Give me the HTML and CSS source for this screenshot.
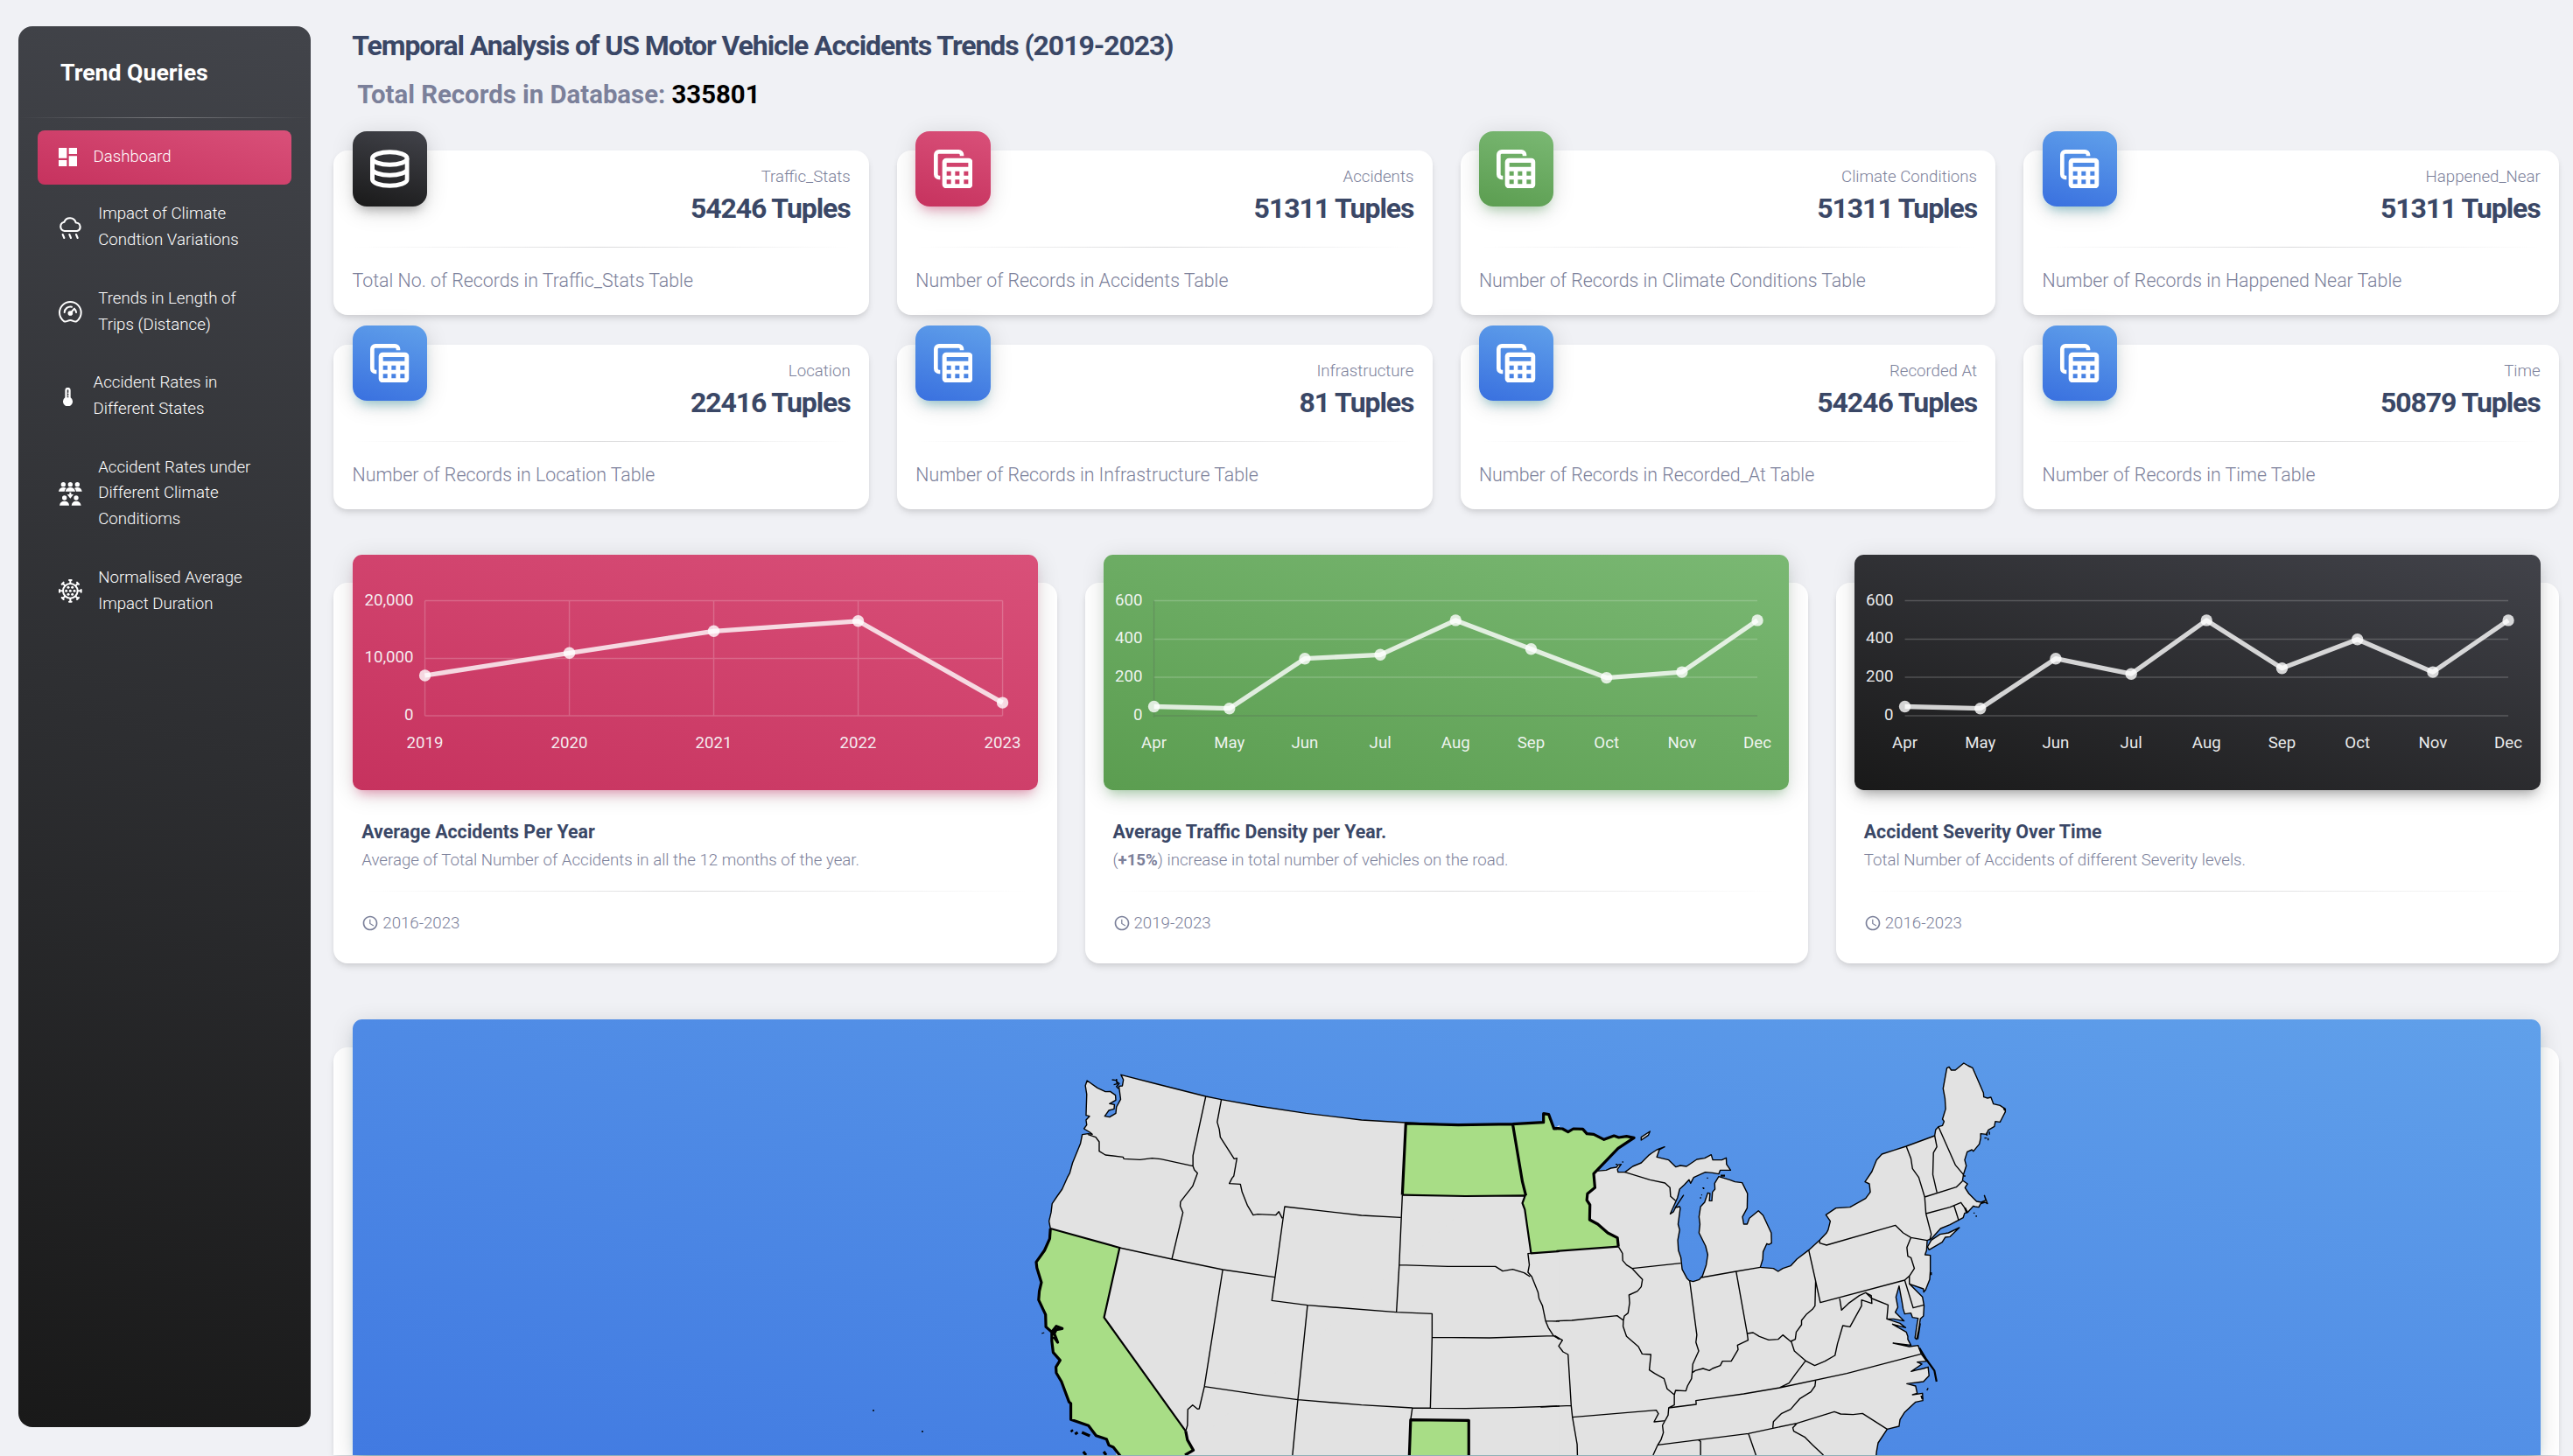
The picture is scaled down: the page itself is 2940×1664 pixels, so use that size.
FILE: index.html
```html
<!DOCTYPE html>
<html lang="en">
<head>
<meta charset="utf-8">
<title>Temporal Analysis of US Motor Vehicle Accidents Trends</title>
<link rel="stylesheet" href="styles.css">
</head>
<body>
<svg class="sprite" aria-hidden="true">
  <symbol id="i-table" viewBox="0 0 134 134">
    <path d="M22 96H18a11 11 0 0 1-11-11V18a11 11 0 0 1 11-11H85a11 11 0 0 1 11 11V22" fill="none" stroke="currentColor" stroke-width="14"/>
    <path fill="currentColor" fill-rule="evenodd" d="M43 29H119a14 14 0 0 1 14 14V119a14 14 0 0 1-14 14H43a14 14 0 0 1-14-14V43a14 14 0 0 1 14-14ZM44 45V59H118V45ZM44 74V89H59V74ZM73 74V89H88V74ZM103 74V89H118V74ZM44 103V118H59V103ZM73 103V118H88V103ZM103 103V118H118V103Z"/>
  </symbol>
  <symbol id="i-db" viewBox="0 0 134 134">
    <g fill="none" stroke="currentColor" stroke-width="15"><ellipse cx="67" cy="30" rx="59.5" ry="22"/><path d="M7.500 30V102a59.500 22 0 0 0 119 0V30M7.500 66a59.500 22 0 0 0 119 0"/></g>
  </symbol>
  <symbol id="i-clock" viewBox="0 0 24 24"><path fill="currentColor" d="M11.990 2C6.470 2 2 6.480 2 12s4.470 10 9.990 10C17.520 22 22 17.520 22 12S17.520 2 11.990 2zM12 20c-4.420 0-8-3.580-8-8s3.580-8 8-8 8 3.580 8 8-3.580 8-8 8zm.5-13H11v6l5.250 3.150.75-1.230-4.500-2.670z"/></symbol>
</svg>

<aside class="sidebar">
  <h1 class="brand">Trend Queries</h1>
  <hr class="rule rule-light">
  <nav class="nav">
    <a class="item active"><svg class="ico" viewBox="3 3 18 18"><path fill="currentColor" d="M3 13h8V3H3v10zm0 8h8v-6H3v6zm10 0h8V11h-8v10zm0-18v6h8V3h-8z"/></svg><span>Dashboard</span></a>
    <a class="item"><svg class="ico wide" viewBox="0 0 80 80"><g fill="none" stroke="currentColor" stroke-width="6.300" stroke-linecap="round" stroke-linejoin="round"><path d="M20 51a15.500 15.500 0 0 1-1-30.500A21 21 0 0 1 59 22.500 14.500 14.500 0 0 1 63 51Z"/><path d="M14 63l5 12M37 63l5 12M60 63l5 12"/></g></svg><span>Impact of Climate<br>Condtion Variations</span></a>
    <a class="item"><svg class="ico wide" viewBox="0 0 80 80"><g fill="none" stroke="currentColor" stroke-width="6" stroke-linecap="round" stroke-linejoin="round"><path d="M19 73C9 66 3 55 3 43a37 37 0 0 1 74 0C77 55 71 66 61 73c-8 3-12-4-21-4s-13 7-21 4Z"/><path d="M20 42a20.500 20.500 0 0 1 25-19M57 33a20 20 0 0 1 3 9M40 45L54 29"/></g><circle cx="40" cy="45" r="8.500" fill="currentColor"/></svg><span>Trends in Length of<br>Trips (Distance)</span></a>
    <a class="item"><svg class="ico" viewBox="0 0 63 63"><path fill="currentColor" fill-rule="evenodd" d="M22 9a9.500 9.500 0 0 1 19 0V34a16.500 16.500 0 1 1-19 0ZM29 9V34H34V29H31V26H34V20H31V17H34V9a2.500 2.500 0 0 0-5 0Z"/></svg><span>Accident Rates in<br>Different States</span></a>
    <a class="item"><svg class="ico wide" viewBox="0 0 80 80"><g fill="currentColor"><circle cx="16" cy="8" r="8"/><circle cx="40" cy="8" r="8"/><circle cx="64" cy="8" r="8"/><path d="M0 32q2-14 16-14q7 0 10 3-5 4-6 11ZM23 32q3-14 17-14t17 14ZM80 32q-2-14-16-14-7 0-10 3 5 4 6 11ZM37 35h6V42h8L40 56 29 42h8Z"/><circle cx="20" cy="54" r="8"/><circle cx="60" cy="54" r="8"/><path d="M3 80q2-15 17-15t16 15ZM44 80q2-15 16-15t17 15Z"/></g></svg><span>Accident Rates under<br>Different Climate<br>Conditioms</span></a>
    <a class="item"><svg class="ico wide" viewBox="0 0 80 80"><g fill="none" stroke="currentColor" stroke-width="6" stroke-linecap="round"><circle cx="40" cy="40" r="25"/><path d="M40 14V3M36 3h8M40 66V77M36 77h8M14 40H3M3 36v8M66 40H77M77 36v8M22 22L14 14M11 17l6-6M58 22l8-8M63 11l6 6M22 58l-8 8M11 63l6 6M58 58l8 8M63 69l6-6"/></g><g fill="currentColor"><circle cx="33" cy="28" r="4.500"/><circle cx="47" cy="28" r="4.500"/><circle cx="26" cy="40" r="4.500"/><circle cx="40" cy="40" r="4.500"/><circle cx="54" cy="40" r="4.500"/><circle cx="33" cy="52" r="4.500"/><circle cx="47" cy="52" r="4.500"/></g></svg><span>Normalised Average<br>Impact Duration</span></a>
  </nav>
</aside>

<main class="main">
  <h2 class="title">Temporal Analysis of US Motor Vehicle Accidents Trends (2019-2023)</h2>
  <p class="total">Total Records in Database: <b>335801</b></p>

  <section class="stats">
    <article class="card stat"><div class="badge dark"><svg><use href="#i-db"/></svg></div><p class="label">Traffic_Stats</p><p class="num">54246 Tuples</p><hr class="rule"><p class="desc">Total No. of Records in Traffic_Stats Table</p></article>
    <article class="card stat"><div class="badge pink"><svg><use href="#i-table"/></svg></div><p class="label">Accidents</p><p class="num">51311 Tuples</p><hr class="rule"><p class="desc">Number of Records in Accidents Table</p></article>
    <article class="card stat"><div class="badge green"><svg><use href="#i-table"/></svg></div><p class="label">Climate Conditions</p><p class="num">51311 Tuples</p><hr class="rule"><p class="desc">Number of Records in Climate Conditions Table</p></article>
    <article class="card stat"><div class="badge blue"><svg><use href="#i-table"/></svg></div><p class="label">Happened_Near</p><p class="num">51311 Tuples</p><hr class="rule"><p class="desc">Number of Records in Happened Near Table</p></article>
    <article class="card stat"><div class="badge blue"><svg><use href="#i-table"/></svg></div><p class="label">Location</p><p class="num">22416 Tuples</p><hr class="rule"><p class="desc">Number of Records in Location Table</p></article>
    <article class="card stat"><div class="badge blue"><svg><use href="#i-table"/></svg></div><p class="label">Infrastructure</p><p class="num">81 Tuples</p><hr class="rule"><p class="desc">Number of Records in Infrastructure Table</p></article>
    <article class="card stat"><div class="badge blue"><svg><use href="#i-table"/></svg></div><p class="label">Recorded At</p><p class="num">54246 Tuples</p><hr class="rule"><p class="desc">Number of Records in Recorded_At Table</p></article>
    <article class="card stat"><div class="badge blue"><svg><use href="#i-table"/></svg></div><p class="label">Time</p><p class="num">50879 Tuples</p><hr class="rule"><p class="desc">Number of Records in Time Table</p></article>
  </section>

  <section class="charts">
    <article class="card chart-card">
      <div class="plot pink"><svg viewBox="0 0 783.500 269">
        <path class="grid" d="M82.500 52.500H742.500M82.500 118.500H742.500M82.500 184H742.500M82.500 52.500V184M247.500 52.500V184M412.500 52.500V184M577.500 52.500V184M742.500 52.500V184"/>
        <polyline class="line" points="82.500,138 247.500,112.300 412.500,87.300 577.500,75.800 742.500,169.100"/>
        <g class="dots"><circle cx="82.500" cy="138" r="6.700"/><circle cx="247.500" cy="112.300" r="6.700"/><circle cx="412.500" cy="87.300" r="6.700"/><circle cx="577.500" cy="75.800" r="6.700"/><circle cx="742.500" cy="169.100" r="6.700"/></g>
        <g class="yl"><text x="69.500" y="58">20,000</text><text x="69.500" y="123">10,000</text><text x="69.500" y="188.500">0</text></g>
        <g class="xl"><text x="82.500" y="220.700">2019</text><text x="247.500" y="220.700">2020</text><text x="412.500" y="220.700">2021</text><text x="577.500" y="220.700">2022</text><text x="742.500" y="220.700">2023</text></g>
      </svg></div>
      <h3>Average Accidents Per Year</h3><p class="sub">Average of Total Number of Accidents in all the 12 months of the year.</p><hr class="rule"><p class="foot"><svg><use href="#i-clock"/></svg>2016-2023</p>
    </article>
    <article class="card chart-card">
      <div class="plot green"><svg viewBox="0 0 783.500 269">
        <path class="grid" d="M57.500 52.500H747M57.500 96.500H747M57.500 140H747"/><path class="axis" d="M57.500 52.500V186M57.500 184H747"/>
        <polyline class="line" points="57.500,173.500 143.700,175.700 229.900,118.700 316.100,114.300 402.200,74.900 488.400,107.700 574.600,140.600 660.800,134.100 747,74.900"/>
        <g class="dots"><circle cx="57.500" cy="173.500" r="6.700"/><circle cx="143.700" cy="175.700" r="6.700"/><circle cx="229.900" cy="118.700" r="6.700"/><circle cx="316.100" cy="114.300" r="6.700"/><circle cx="402.200" cy="74.900" r="6.700"/><circle cx="488.400" cy="107.700" r="6.700"/><circle cx="574.600" cy="140.600" r="6.700"/><circle cx="660.800" cy="134.100" r="6.700"/><circle cx="747" cy="74.900" r="6.700"/></g>
        <g class="yl"><text x="44.500" y="57.500">600</text><text x="44.500" y="101">400</text><text x="44.500" y="145">200</text><text x="44.500" y="188.500">0</text></g>
        <g class="xl"><text x="57.500" y="220.700">Apr</text><text x="143.700" y="220.700">May</text><text x="229.900" y="220.700">Jun</text><text x="316.100" y="220.700">Jul</text><text x="402.200" y="220.700">Aug</text><text x="488.400" y="220.700">Sep</text><text x="574.600" y="220.700">Oct</text><text x="660.800" y="220.700">Nov</text><text x="747" y="220.700">Dec</text></g>
      </svg></div>
      <h3>Average Traffic Density per Year.</h3><p class="sub">(<b>+15%</b>) increase in total number of vehicles on the road.</p><hr class="rule"><p class="foot"><svg><use href="#i-clock"/></svg>2019-2023</p>
    </article>
    <article class="card chart-card">
      <div class="plot dark"><svg viewBox="0 0 783.500 269">
        <path class="grid" d="M57.500 52.500H747M57.500 96.500H747M57.500 140H747M57.500 184H747"/>
        <polyline class="line" points="57.500,173.500 143.700,175.700 229.900,118.700 316.100,136.200 402.200,74.900 488.400,129.700 574.600,96.800 660.800,134.100 747,74.900"/>
        <g class="dots"><circle cx="57.500" cy="173.500" r="6.700"/><circle cx="143.700" cy="175.700" r="6.700"/><circle cx="229.900" cy="118.700" r="6.700"/><circle cx="316.100" cy="136.200" r="6.700"/><circle cx="402.200" cy="74.900" r="6.700"/><circle cx="488.400" cy="129.700" r="6.700"/><circle cx="574.600" cy="96.800" r="6.700"/><circle cx="660.800" cy="134.100" r="6.700"/><circle cx="747" cy="74.900" r="6.700"/></g>
        <g class="yl"><text x="44.500" y="57.500">600</text><text x="44.500" y="101">400</text><text x="44.500" y="145">200</text><text x="44.500" y="188.500">0</text></g>
        <g class="xl"><text x="57.500" y="220.700">Apr</text><text x="143.700" y="220.700">May</text><text x="229.900" y="220.700">Jun</text><text x="316.100" y="220.700">Jul</text><text x="402.200" y="220.700">Aug</text><text x="488.400" y="220.700">Sep</text><text x="574.600" y="220.700">Oct</text><text x="660.800" y="220.700">Nov</text><text x="747" y="220.700">Dec</text></g>
      </svg></div>
      <h3>Accident Severity Over Time</h3><p class="sub">Total Number of Accidents of different Severity levels.</p><hr class="rule"><p class="foot"><svg><use href="#i-clock"/></svg>2016-2023</p>
    </article>
  </section>

  <section class="card map-card">
    <div class="map blue">
      <svg class="us" viewBox="0 0 2500 498">
        <g transform="matrix(.35714 0 0 .33333 1357.300 14)">
          <path class="land" d="M50,1600 L50,332 70,333 88,344 105,333 135,334 148,350 170,352 203,370 235,357 250,363 275,359 299,364 285,374 248,400 178,478 210,475 225,468 243,465 248,457 258,455 246,472 248,482 270,482 295,462 322,450 345,425 355,417 372,405 397,395 380,405 372,430 410,440 433,464 447,459 467,462 500,438 525,434 546,422 551,440 580,440 594,433 595,455 608,475 575,475 570,488 550,484 527,482 490,500 480,520 475,508 460,525 445,540 438,570 415,625 425,618 432,603 445,600 447,605 440,660 445,680 439,715 441,750 449,775 453,815 468,845 475,853 488,857 508,850 518,838 530,800 535,765 528,735 507,690 510,660 507,635 512,600 525,585 535,553 542,555 540,580 548,580 550,550 558,540 557,520 570,497 605,508 622,515 645,518 662,555 661,605 646,635 650,660 661,660 668,640 697,614 712,630 738,690 739,725 730,730 724,727 712,755 711,780 703,808 745,812 760,822 775,812 800,803 820,780 858,749 893,715 915,690 920,680 927,650 913,628 945,605 990,602 1040,572 1055,550 1052,522 1038,515 1060,480 1075,440 1092,420 1130,407 1170,393 1261,357 1264,337 1273,326 1286,322 1291,308 1286,300 1296,265 1294,230 1288,195 1300,125 1307,121 1314,132 1327,132 1354,108 1368,117 1382,124 1417,210 1418,224 1430,228 1441,225 1449,248 1470,253 1487,265 1487,275 1475,300 1470,310 1455,308 1452,325 1432,338 1427,352 1408,350 1408,365 1404,385 1385,410 1380,405 1365,412 1357,440 1362,460 1353,490 1350,510 1366,522 1358,535 1370,555 1395,582 1410,585 1425,578 1420,562 1430,590 1422,585 1408,590 1402,602 1390,600 1385,598 1366,620 1357,622 1352,638 1310,662 1280,675 1250,710 1237,716 1235,750 1230,765 1247,767 1247,820 1245,850 1232,885 1226,893 1225,882 1180,865 1222,910 1227,940 1225,975 1215,985 1210,1020 1203,1055 1198,1050 1205,1000 1208,983 1190,980 1185,965 1165,968 1160,950 1157,930 1147,872 1137,910 1143,945 1135,962 1163,992 1130,985 1108,985 1150,1000 1168,1015 1126,1003 1170,1030 1175,1045 1175,1055 1185,1075 1128,1068 1180,1080 1208,1076 1218,1105 1235,1130 1205,1133 1220,1140 1186,1165 1205,1160 1225,1155 1240,1150 1243,1180 1225,1200 1172,1207 1200,1215 1205,1240 1190,1245 1222,1240 1223,1265 1200,1270 1165,1305 1150,1330 1147,1353 1109,1363 1080,1410 1075,1440 1060,1600Z"/>
        </g>
        <g transform="matrix(.3954 0 0 .33333 757.300 14)">
          <path class="fill" d="M1572,320 L1572,1600 300,1600 290,1430Z"/>
          <path class="land" d="M1572,332 L1556,332 1541,284 1526,281 1526,311 1437,317 1280,320 1128,312 1000,303 840,280 700,255 595,233 550,222 400,177 305,148 312,165 309,186 299,187 304,232 292,258 290,280 272,293 258,290 270,270 285,265 286,250 272,247 290,235 289,218 274,205 260,206 237,193 207,168 202,185 206,215 204,287 214,290 204,303 206,320 198,333 215,345 222,352 210,350 193,353 188,383 165,450 157,485 150,500 135,540 119,567 106,590 103,620 97,650 101,675 99,710 84,750 60,790 62,810 75,860 69,890 67,920 87,970 88,1012 105,1030 105,1060 109,1100 129,1127 117,1150 118,1170 133,1200 155,1270 160,1275 160,1330 211,1351 233,1385 263,1397 270,1418 283,1425 303,1455 330,1600"/>
          <path class="hot" d="M101,675 L301,741 256,980 492,1370 497,1400 514,1435 490,1450 480,1600 330,1600 303,1455 283,1425 270,1418 263,1397 233,1385 211,1351 160,1330 160,1275 155,1270 133,1200 118,1170 117,1150 129,1127 109,1100 105,1060 105,1030 88,1012 87,970 67,920 69,890 75,860 62,810 60,790 84,750 99,710ZM1128,315 L1280,320 1437,317 1465,515 1473,562 1300,564 1118,560ZM1437,317 L1526,311 1526,281 1541,284 1556,332 1572,332 1572,753 1490,760 1472,610 1465,588 1475,568 1465,515ZM1142,1331 L1310,1333 1310,1600 1130,1600Z"/>
          <path class="thin" d="M210,353 L232,362 242,378 242,410 260,423 311,430 313,436 360,439 395,434 420,437 513,461M550,222 L513,425 513,461 517,474 526,485 512,530 477,583 476,598 484,620 452,780M301,741 L452,780 599,816 749,842M595,233 L583,310 589,335 592,362 632,436 640,434 631,495 626,502 618,521 650,523 655,550 670,595 687,629 700,626 752,629 761,617 771,640M1101,962 L1204,967 1204,1048 1199,1290M1113,637 L1000,630 778,600 741,922 844,938 1101,962 1109,800 1118,560M599,816 L546,1217 531,1293 526,1294 512,1280 498,1295 497,1350 492,1370M844,938 L816,1262 800,1460M546,1217 L700,1244 816,1262 1000,1280 1147,1290 1300,1292 1440,1289 1572,1284M1147,1290 L1142,1331M1204,1048 L1370,1050 1555,1043M1109,800 L1250,805 1387,805 1408,821 1437,815 1470,827 1487,840M1490,760 L1481,761 1485,800 1481,825 1492,840 1510,893 1513,915 1523,940 1532,992 1540,1015 1555,1043 1572,1055M1532,992 L1572,993"/>
          <path class="thin" d="M279,165l12,2 3,12-10,3m8-20 1,10 7,6-8,10 6,8"/>
          <path class="thick" d="M101,675 L99,710 84,750 60,790 62,810 75,860 69,890 67,920 87,970 88,1012 105,1030 105,1060 109,1100 129,1127 117,1150 118,1170 133,1200 155,1270 160,1275 160,1330 211,1351 233,1385 263,1397 270,1418 283,1425 303,1455M492,1370 L497,1400 514,1435 490,1452M105,1030 L118,1010 135,1018 118,1022 112,1035 122,1065 110,1045M1118,560 L1128,315 1280,320 1437,317 1465,515 1475,562M1437,317 L1526,311 1526,281 1541,284 1556,332 1572,332M1138,1460 L1142,1331 1310,1333 1310,1460M172,1380 L180,1374M192,1374 L215,1386M196,1440 L204,1452M255,1440 L262,1452M161,1366l4,6M79,1032l1,3"/>
          <path class="mid" d="M101,675 L301,741 256,980 492,1370M1118,560 L1300,564 1473,562 1465,588 1472,610 1490,760 1572,753"/>
        </g>
        <g transform="matrix(.35714 0 0 .33333 1357.300 14)">
          <path class="hot" d="M48,332 L70,333 88,344 105,333 135,334 148,350 170,352 203,370 235,357 250,363 275,359 299,364 285,374 248,400 178,478 170,487 174,535 150,556 148,578 158,594 157,645 183,660 215,690 246,707 249,737 48,753Z"/>
          <path class="thick" d="M40,332 L70,333 88,344 105,333 135,334 148,350 170,352 203,370 235,357 250,363 275,359 299,364 285,374 248,400 178,478 170,487 174,535 150,556 148,578 158,594 157,645 183,660 215,690 246,707 249,737"/>
          <path class="mid" d="M48,753 L249,737"/>
          <path class="land" d="M322,362 L350,342 345,355 322,372ZM1243,748 L1238,738 1250,715 1278,695 1305,690 1340,672 1310,703 1295,705 1285,722Z"/>
          <path class="thin" d="M270,482 L350,508 398,519 414,535 416,565 432,580M458,560 L430,605M249,737 L262,760 263,785 275,800 293,812 326,850 322,875 310,890 283,903 285,930 280,965 268,975 265,990 264,1010 275,1045 313,1080 325,1105 353,1107 348,1160 365,1172 395,1190 405,1225 428,1245 428,1280 410,1290 408,1315 390,1350 393,1375 385,1400 375,1417 360,1452M293,812 L449,794M50,992 L100,990 245,974 265,990M45,1042 L60,1052 70,1058 58,1078 72,1098 88,1107 98,1282 102,1322 117,1415 118,1455M0,1287 L98,1282M102,1322 L370,1298 377,1310 363,1338 400,1334M477,853 L500,1040 497,1065 506,1095 487,1140 485,1170M858,749 L880,855 878,940 870,952 850,970 835,990 835,1005 818,1030 815,1055 800,1062 775,1040 760,1055 730,1057 700,1045 680,1032 661,1035M626,824 L661,1035 664,1058 630,1075 632,1090 610,1130 582,1130 575,1145 550,1155 540,1162 520,1155 495,1162 485,1170 483,1190 470,1215 465,1232 432,1230 428,1245M515,843 L626,822 703,808M880,855 L895,929 1165,852 1180,838 1196,812 1185,775 1175,770 1172,740 1185,706 1237,716M1185,706 L1160,690 1135,664 915,732 893,725 893,715M957,915 L963,955 985,932 1020,905 1040,895 1058,905 1060,932 1027,920 1027,940 990,1012 967,1008 950,1070 942,1110 910,1130 877,1145 850,1130 812,1095 802,1062M1040,895 L1060,915 1112,937 1108,985M1165,852 L1192,947 1227,937M1180,838 L1180,865M847,1130 L815,1175 795,1205 765,1221M1218,1105 L980,1172 765,1221 650,1242 497,1265 498,1278 410,1290M880,1197 L878,1215 865,1235 830,1258 800,1295 770,1310 745,1337 743,1358M375,1417 L665,1378 743,1360 820,1343 940,1303 960,1311 1000,1313 1030,1309 1109,1363M820,1343 L807,1358 810,1370 845,1390 870,1417 905,1452M665,1378 L690,1455M505,1400 L512,1405 512,1455M1170,393 L1185,435 1190,470 1210,500 1229,567 1233,624 1250,695 1245,715M1261,357 L1268,395 1257,415 1255,490 1268,551M1273,326 L1327,457 1353,490M1229,567 L1330,533 1350,512M1233,624 L1310,602 1345,586 1366,618M1323,597 L1338,648"/>
          <path class="mid" d="M1212,1085 L1235,1125 1260,1162 1267,1200M1482,262l4,8M1358,604l6,18M576,494h14M1218,1248l4,12"/>
          <path class="thin" d="M1428,345v12m8-14v10m-16 12h8m4 0v8M1385,622h4M1394,630v5M518,536h4v4M532,502h4M510,570h4M514,560h3M240,455h6M263,445v4M1357,492v6M1240,1222l-4,8M1215,1000l-8,55M1250,825v10"/>
        </g>
        <path class="thin" d="M594,447h2M650,471h2"/>
      </svg>
    </div>
  </section>
</main>
</body>
</html>
```
FILE: styles.css
```css
* { box-sizing: border-box; }
body {
  margin: 0;
  height: 1664px;
  overflow: hidden;
  display: flex;
  align-items: flex-start;
  background: #f0f1f5;
  font-family: Roboto, "Liberation Sans", sans-serif;
  font-weight: 300;
  color: #7b809a;
}
p, h1, h2, h3 { margin: 0; }
b { font-weight: 700; }
.sprite { position: absolute; width: 0; height: 0; }

.dark { background: linear-gradient(195deg, #42434a, #191919); --glow: rgba(64, 64, 64, .4); }
.pink { background: linear-gradient(195deg, #d95079, #c6325e); --glow: rgba(233, 30, 99, .4); }
.green { background: linear-gradient(195deg, #7ab873, #5b9d50); --glow: rgba(76, 175, 80, .4); }
.blue { background: linear-gradient(195deg, #60a0ea, #3970df); --glow: rgba(0, 140, 160, .4); }

.rule { border: 0; height: 1px; margin: 0; background: linear-gradient(90deg, rgba(52,71,103,0), rgba(52,52,60,.18), rgba(52,71,103,0)); }
.rule-light { background: linear-gradient(90deg, rgba(255,255,255,0), rgba(255,255,255,.3), rgba(255,255,255,0)); }

.sidebar {
  flex: none;
  width: 334px;
  height: 1601px;
  margin: 30px 0 0 21px;
  border-radius: 16px;
  background: linear-gradient(195deg, #42444a, #191919);
  color: #fff;
}
.brand { padding: 35px 0 0 48px; height: 104px; font-size: 26.67px; line-height: 36px; font-weight: 700; }
.nav { display: flex; flex-direction: column; gap: 4.6px; padding: 14px 22px; }
.item {
  display: flex;
  align-items: center;
  gap: 18.5px;
  padding: 16px 24px;
  font-size: 18.67px;
  line-height: 29.87px;
}
.active { border-radius: 8px; background: linear-gradient(195deg, #d95079, #c6325e); margin-bottom: -1px; }
.ico { width: 21px; height: 21px; flex: none; }
.wide { width: 26.7px; height: 26.7px; }

.main { flex: none; width: 2542.7px; margin-left: 26.300px; padding-top: 30px; }
.title { margin-left: 21px; font-size: 32px; line-height: 44px; font-weight: 700; letter-spacing: -1.08px; color: #3a4766; }
.total { margin: 14px 0 43.500px 27px; font-size: 29.33px; line-height: 40px; font-weight: 700; }
.total b { color: #000; }

.card { background: #fff; border-radius: 16px; box-shadow: 0 5px 8px -1px rgba(0,0,0,.1), 0 3px 5px -1px rgba(0,0,0,.06); }
.stats { display: grid; grid-template-columns: repeat(4, 1fr); gap: 34px 32px; }
.stat { position: relative; height: 188px; padding: 16px 21.3px 0; }
.badge {
  position: absolute;
  left: 21.3px;
  top: -21.3px;
  width: 85.3px;
  height: 85.3px;
  border-radius: 16px;
  display: grid;
  place-items: center;
  color: #fff;
}
.badge, .plot, .map { box-shadow: 0 5px 27px rgba(0,0,0,.14), 0 9px 13px -6px var(--glow); }
.badge svg { width: 44.7px; height: 44.7px; }
.label { text-align: right; font-size: 18.67px; line-height: 28px; }
.num { text-align: right; font-size: 32px; line-height: 44px; font-weight: 700; letter-spacing: -1.08px; color: #3a4766; }
.stat .rule { margin: 22px 0 21px; }
.desc { font-size: 21.33px; line-height: 34px; }

.charts { display: grid; grid-template-columns: repeat(3, 1fr); gap: 32px; margin-top: 84px; }
.chart-card { height: 435.5px; padding: 0 21.3px; }
.plot { height: 269px; margin-top: -32px; border-radius: 10.7px; }
.plot svg { display: block; width: 100%; height: 100%; }
.plot text { font-size: 18.67px; font-weight: 400; fill: #f8f9fa; fill-opacity: .95; }
.yl { text-anchor: end; }
.xl { text-anchor: middle; }
.grid { fill: none; stroke: rgba(255,255,255,.2); stroke-width: 1.4; }
.axis { fill: none; stroke: rgba(90,110,90,.35); stroke-width: 1.4; }
.line { fill: none; stroke: rgba(255,255,255,.8); stroke-width: 5.300; stroke-linejoin: round; }
.dots { fill: rgba(255,255,255,.8); }
.chart-card h3 { margin: 33.500px 0 4px 10.700px; font-size: 21.33px; line-height: 29px; font-weight: 700; color: #3a4766; }
.sub { margin-left: 10.7px; font-size: 18.67px; line-height: 28px; }
.chart-card .rule { margin: 21px 10.7px 22px; }
.foot { display: flex; align-items: center; gap: 4px; margin-left: 10.7px; font-size: 18.67px; line-height: 28px; }
.foot svg { width: 20px; height: 20px; }

.map-card { display: flow-root; height: 466px; margin-top: 96px; padding: 0 21.3px; border-radius: 16px 16px 0 0; }
.map { height: 498px; margin-top: -32px; border-radius: 10.7px 10.7px 0 0; background-size: 100% 800px; overflow: hidden; }
.us { display: block; width: 2500px; height: 498px; }
.us path { vector-effect: non-scaling-stroke; stroke-linejoin: round; }
.fill { fill: #e2e2e2; }
.land { fill: #e2e2e2; stroke: #000; stroke-width: 1.4; }
.hot { fill: #a8dd86; }
.thin, .mid, .thick { fill: none; stroke: #000; stroke-width: 1.4; }
.mid { stroke-width: 2.2; }
.thick { stroke-width: 3.2; }
```
